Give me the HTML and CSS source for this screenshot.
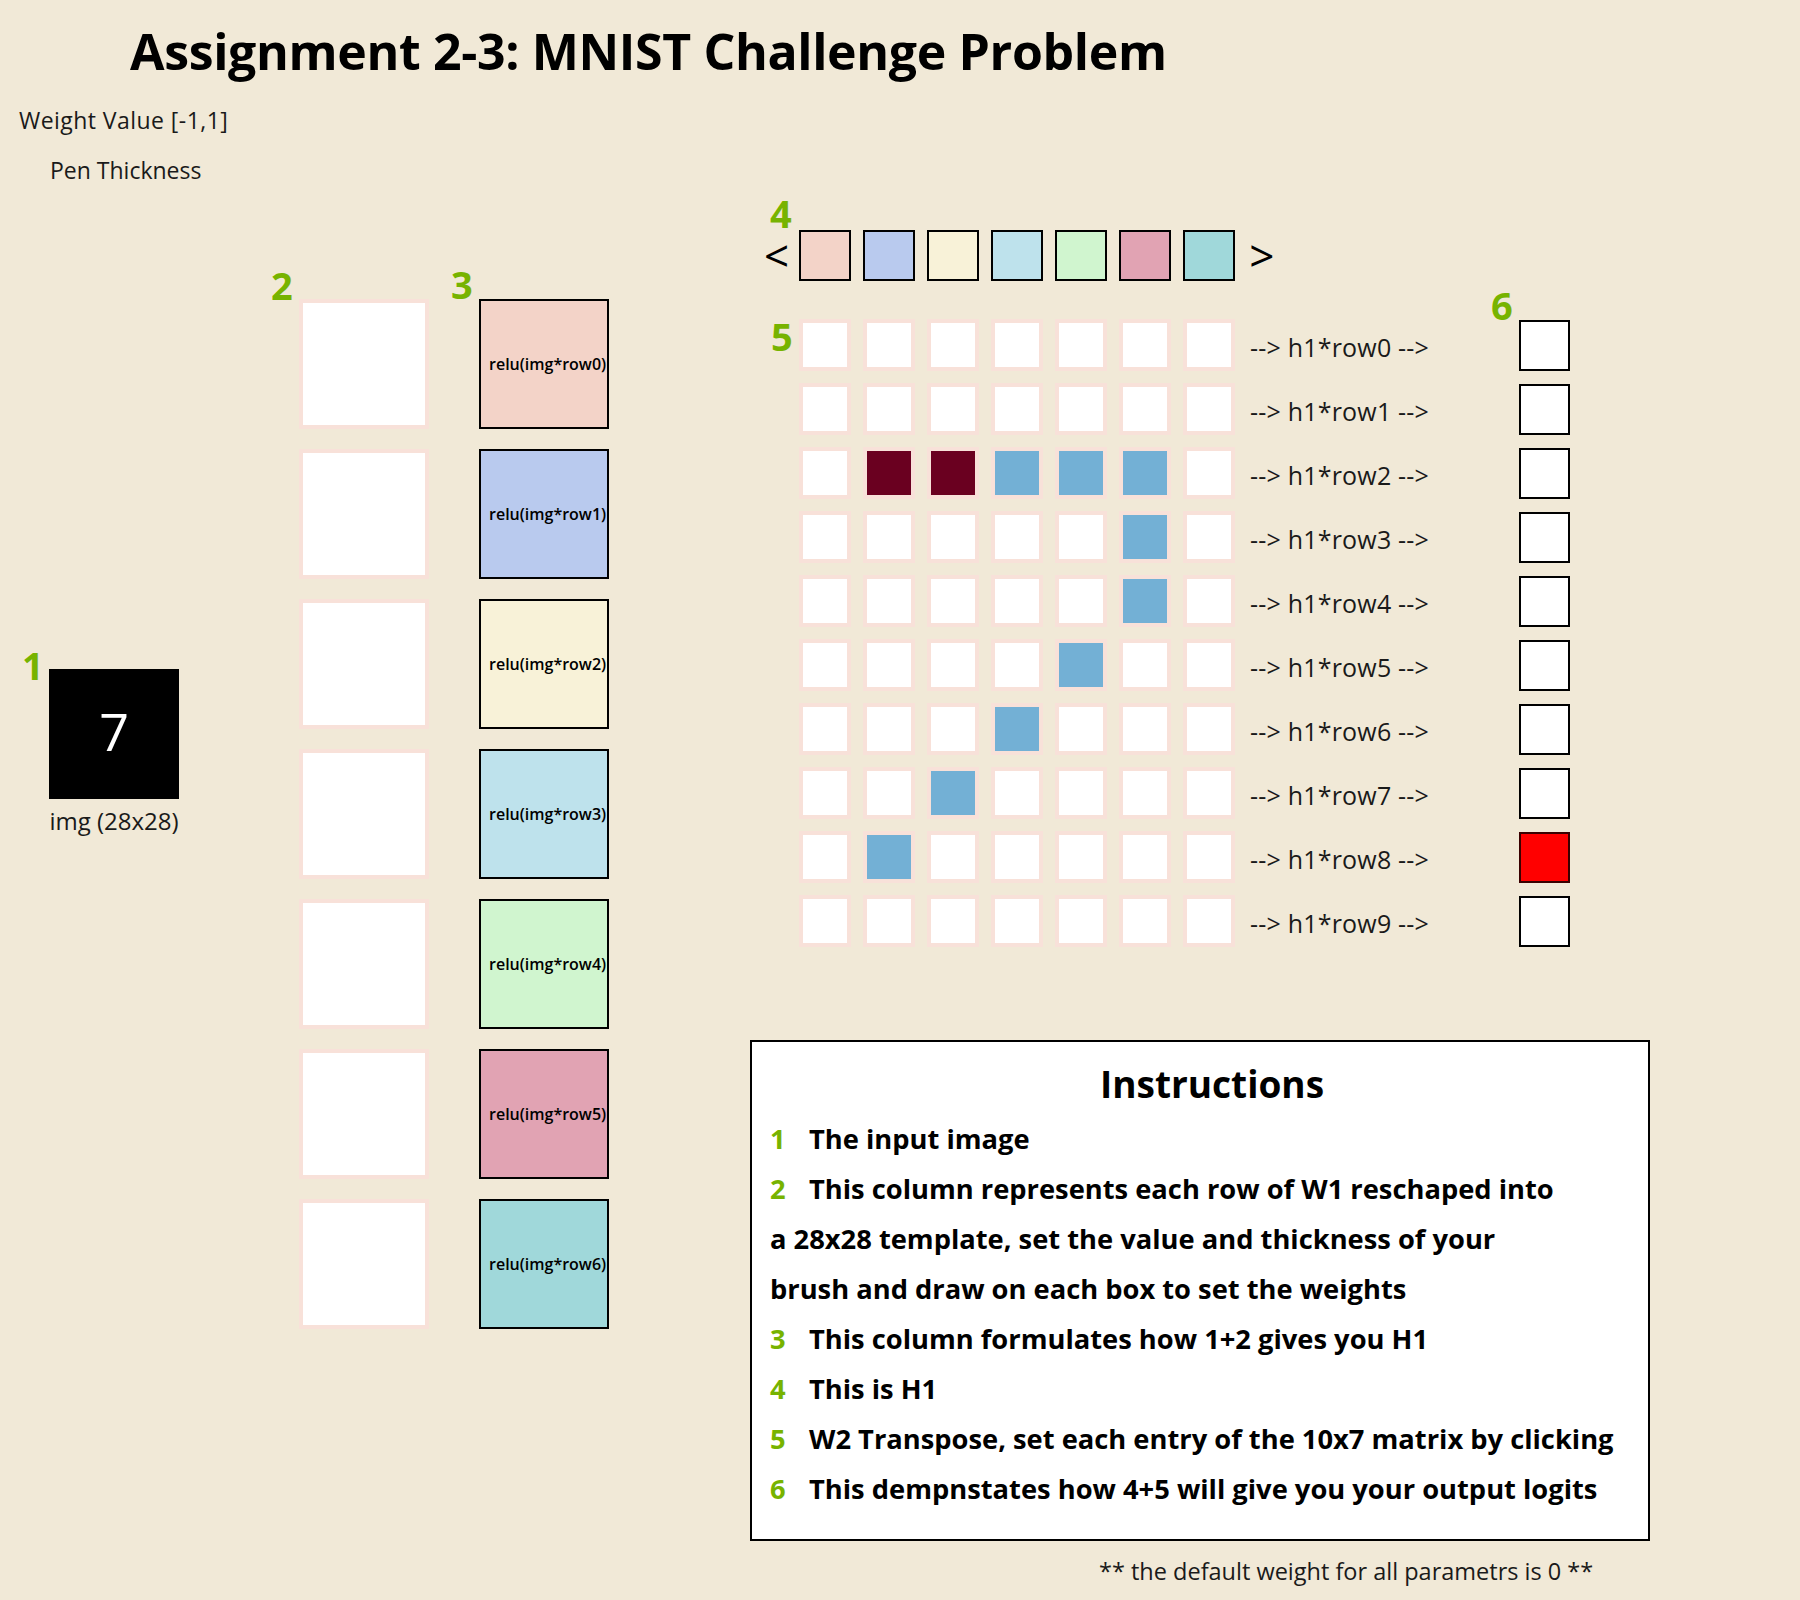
FILE: index.html
```html
<!DOCTYPE html>
<html>
<head>
<meta charset="utf-8">
<title>Assignment 2-3: MNIST Challenge Problem</title>
<link rel="stylesheet" href="styles.css">
</head>
<body>
<div class="page">
  <h1 class="title">Assignment 2-3: MNIST Challenge Problem</h1>
  <div class="controls">
    <div class="ctrl ctrl-weight">Weight Value [-1,1]</div>
    <div class="ctrl ctrl-pen">Pen Thickness</div>
  </div>
  <div class="main">
    <section class="sec-input">
      <span class="tag tag-1">1</span>
      <div class="img-box">7</div>
      <div class="img-caption">img (28x28)</div>
    </section>
    <section class="sec-w1">
      <span class="tag tag-2">2</span>
      <div class="w1"></div>
      <div class="w1"></div>
      <div class="w1"></div>
      <div class="w1"></div>
      <div class="w1"></div>
      <div class="w1"></div>
      <div class="w1"></div>
    </section>
    <section class="sec-relu">
      <span class="tag tag-3">3</span>
      <div class="relu c0">relu(img*row0)</div>
      <div class="relu c1">relu(img*row1)</div>
      <div class="relu c2">relu(img*row2)</div>
      <div class="relu c3">relu(img*row3)</div>
      <div class="relu c4">relu(img*row4)</div>
      <div class="relu c5">relu(img*row5)</div>
      <div class="relu c6">relu(img*row6)</div>
    </section>
    <section class="sec-right">
      <div class="h1row">
        <span class="tag tag-4">4</span>
        <span class="arrow arrow-left">&lt;</span>
        <div class="h1 c0"></div>
        <div class="h1 c1"></div>
        <div class="h1 c2"></div>
        <div class="h1 c3"></div>
        <div class="h1 c4"></div>
        <div class="h1 c5"></div>
        <div class="h1 c6"></div>
        <span class="arrow arrow-right">&gt;</span>
      </div>
      <div class="grid">
        <span class="tag tag-5">5</span>
        <span class="tag tag-6">6</span>
        <div class="grow">
          <div class="cell"></div><div class="cell"></div><div class="cell"></div><div class="cell"></div><div class="cell"></div><div class="cell"></div><div class="cell"></div>
          <span class="flow">--&gt; h1*row0 --&gt;</span>
          <div class="out"></div>
        </div>
        <div class="grow">
          <div class="cell"></div><div class="cell"></div><div class="cell"></div><div class="cell"></div><div class="cell"></div><div class="cell"></div><div class="cell"></div>
          <span class="flow">--&gt; h1*row1 --&gt;</span>
          <div class="out"></div>
        </div>
        <div class="grow">
          <div class="cell"></div><div class="cell neg"></div><div class="cell neg"></div><div class="cell pos"></div><div class="cell pos"></div><div class="cell pos"></div><div class="cell"></div>
          <span class="flow">--&gt; h1*row2 --&gt;</span>
          <div class="out"></div>
        </div>
        <div class="grow">
          <div class="cell"></div><div class="cell"></div><div class="cell"></div><div class="cell"></div><div class="cell"></div><div class="cell pos"></div><div class="cell"></div>
          <span class="flow">--&gt; h1*row3 --&gt;</span>
          <div class="out"></div>
        </div>
        <div class="grow">
          <div class="cell"></div><div class="cell"></div><div class="cell"></div><div class="cell"></div><div class="cell"></div><div class="cell pos"></div><div class="cell"></div>
          <span class="flow">--&gt; h1*row4 --&gt;</span>
          <div class="out"></div>
        </div>
        <div class="grow">
          <div class="cell"></div><div class="cell"></div><div class="cell"></div><div class="cell"></div><div class="cell pos"></div><div class="cell"></div><div class="cell"></div>
          <span class="flow">--&gt; h1*row5 --&gt;</span>
          <div class="out"></div>
        </div>
        <div class="grow">
          <div class="cell"></div><div class="cell"></div><div class="cell"></div><div class="cell pos"></div><div class="cell"></div><div class="cell"></div><div class="cell"></div>
          <span class="flow">--&gt; h1*row6 --&gt;</span>
          <div class="out"></div>
        </div>
        <div class="grow">
          <div class="cell"></div><div class="cell"></div><div class="cell pos"></div><div class="cell"></div><div class="cell"></div><div class="cell"></div><div class="cell"></div>
          <span class="flow">--&gt; h1*row7 --&gt;</span>
          <div class="out"></div>
        </div>
        <div class="grow">
          <div class="cell"></div><div class="cell pos"></div><div class="cell"></div><div class="cell"></div><div class="cell"></div><div class="cell"></div><div class="cell"></div>
          <span class="flow">--&gt; h1*row8 --&gt;</span>
          <div class="out hot"></div>
        </div>
        <div class="grow">
          <div class="cell"></div><div class="cell"></div><div class="cell"></div><div class="cell"></div><div class="cell"></div><div class="cell"></div><div class="cell"></div>
          <span class="flow">--&gt; h1*row9 --&gt;</span>
          <div class="out"></div>
        </div>
      </div>
      <div class="instructions">
        <h2 class="instr-title">Instructions</h2>
        <div class="instr-body">
          <div class="line"><span class="num">1</span>The input image</div>
          <div class="line"><span class="num">2</span>This column represents each row of W1 reschaped into</div>
          <div class="line">a 28x28 template, set the value and thickness of your</div>
          <div class="line">brush and draw on each box to set the weights</div>
          <div class="line"><span class="num">3</span>This column formulates how 1+2 gives you H1</div>
          <div class="line"><span class="num">4</span>This is H1</div>
          <div class="line"><span class="num">5</span>W2 Transpose, set each entry of the 10x7 matrix by clicking</div>
          <div class="line"><span class="num">6</span>This dempnstates how 4+5 will give you your output logits</div>
        </div>
      </div>
      <p class="note">** the default weight for all parametrs is 0 **</p>
    </section>
  </div>
</div>
</body>
</html>
```
FILE: styles.css
```css
html, body {
  margin: 0;
  padding: 0;
}
body {
  background: #f1e9d7;
  font-family: "Open Sans", "Noto Sans", sans-serif;
  color: #000;
}
.page {
  width: 1800px;
  min-height: 1600px;
}
.title {
  margin: 21px 0 0 130px;
  font-size: 50px;
  line-height: 60px;
  font-weight: 700;
  letter-spacing: -0.35px;
}
.controls {
  margin-top: 14px;
  font-size: 23px;
  line-height: 50px;
  color: #1a1a1a;
}
.ctrl-weight { padding-left: 19px; letter-spacing: 0.45px; }
.ctrl-pen { padding-left: 50px; }

.main {
  display: flex;
  align-items: flex-start;
  margin-top: 34px;
}

.tag {
  position: absolute;
  font-size: 38px;
  line-height: 28px;
  font-weight: 700;
  color: #77b300;
}
.tag-1 { top: -18px; left: -27px; }
.tag-2 { top: -28px; left: -28px; }
.tag-3 { top: -29px; left: -28px; }
.tag-4 { top: -30px; left: 20px; }
.tag-5 { top: 9px; left: 21px; }
.tag-6 { top: -22px; left: 741px; }

.sec-input {
  position: relative;
  margin: 440px 0 0 49px;
  width: 130px;
}
.img-box {
  box-sizing: border-box;
  width: 130px;
  height: 130px;
  padding-bottom: 8px;
  background: #000;
  color: #fff;
  display: flex;
  align-items: center;
  justify-content: center;
  font-size: 52px;
}
.img-caption {
  margin-top: 7px;
  font-size: 24px;
  line-height: 30px;
  text-align: center;
  color: #1a1a1a;
  white-space: nowrap;
}

.sec-w1 {
  position: relative;
  margin: 70px 0 0 120px;
  display: flex;
  flex-direction: column;
  gap: 20px;
}
.w1 {
  width: 122px;
  height: 122px;
  background: #fff;
  border: 4px solid #f8e1d9;
}

.sec-relu {
  position: relative;
  margin: 70px 0 0 50px;
  display: flex;
  flex-direction: column;
  gap: 20px;
}
.relu {
  box-sizing: border-box;
  width: 130px;
  height: 130px;
  border: 2px solid #000;
  display: flex;
  align-items: center;
  padding-left: 8px;
  font-size: 16px;
  font-weight: 600;
  color: #000;
  white-space: nowrap;
}

.c0 { background: #f3d3c8; }
.c1 { background: #b9caee; }
.c2 { background: #f8f2d8; }
.c3 { background: #bee2ec; }
.c4 { background: #d0f5cf; }
.c5 { background: #e1a3b3; }
.c6 { background: #a0d8da; }

.sec-right {
  position: relative;
  margin-left: 141px;
}
.h1row {
  position: relative;
  display: flex;
  align-items: center;
  gap: 12px;
  padding-left: 14px;
  height: 52px;
}
.arrow {
  font-size: 44px;
  line-height: 40px;
}
.arrow-left { margin-right: -2px; }
.arrow-right { margin-left: 2px; }
.h1 {
  width: 48px;
  height: 47px;
  border: 2px solid #000;
}

.grid {
  position: relative;
  margin-top: 32px;
}
.grow {
  display: flex;
  align-items: center;
  height: 64px;
  padding-left: 43px;
}
.cell {
  width: 44px;
  height: 44px;
  margin: 6px;
  border: 4px solid #f8e1d9;
  background: #fff;
  flex: none;
}
.cell.neg { background: #6a0020; }
.cell.pos { background: #73b0d5; }
.flow {
  flex: none;
  width: 269px;
  margin-left: 9px;
  padding-top: 3px;
  font-size: 25px;
  letter-spacing: 0.2px;
  color: #1a1a1a;
  white-space: pre;
}
.out {
  width: 47px;
  height: 47px;
  border: 2px solid #000;
  background: #fff;
  flex: none;
}
.out.hot {
  background: #ff0000;
  border-color: #3a0000;
}

.instructions {
  box-sizing: border-box;
  width: 900px;
  height: 501px;
  margin-top: 87px;
  border: 2px solid #000;
  background: #fff;
  padding: 17px 0 0 18px;
}
.instr-title {
  margin: 0;
  padding-left: 6px;
  text-align: center;
  font-size: 37px;
  line-height: 50px;
  font-weight: 700;
}
.instr-body {
  margin-top: 5px;
  font-size: 27.3px;
  line-height: 50px;
  font-weight: 700;
  white-space: nowrap;
}
.num {
  display: inline-block;
  width: 39px;
  color: #77b300;
}
.note {
  margin: 15px 0 0 349px;
  font-size: 23.5px;
  line-height: 30px;
  color: #1a1a1a;
  white-space: nowrap;
}
```
